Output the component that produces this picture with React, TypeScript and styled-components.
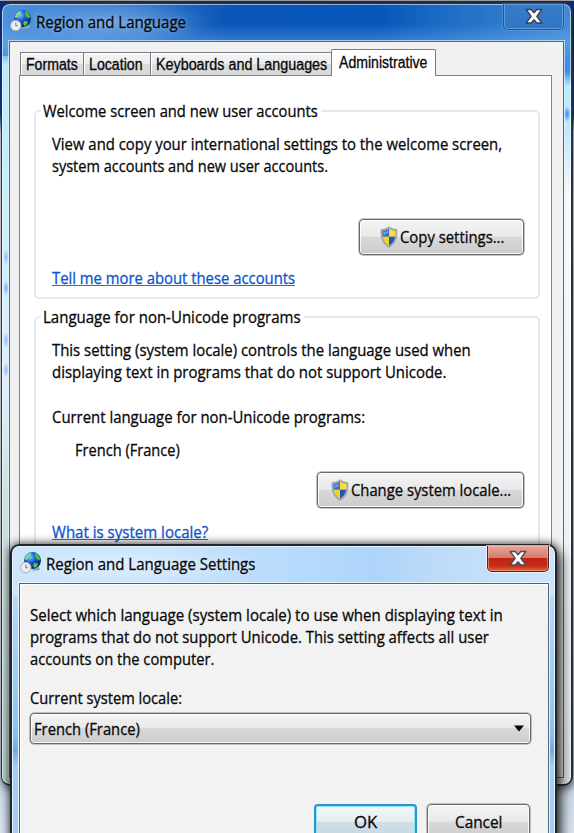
import React, { useLayoutEffect, useRef, useState } from 'react';
import styled, { createGlobalStyle, css } from 'styled-components';

const GlobalStyle = createGlobalStyle`
  * { box-sizing: border-box; }
  body { margin: 0; overflow: hidden; }
`;

const ui = "'Open Sans', 'Noto Sans', sans-serif";
const arial = "'Liberation Sans', Arial, sans-serif";

const Desktop = styled.main`
  position: relative;
  width: 574px;
  height: 833px;
  padding: 2px 0 0 1px;
  overflow: hidden;
  font: 16px/22px ${ui};
  color: #080808;
  background:
    linear-gradient(#a7a9b8, #a7a9b8) 0 0 / 100% 1px no-repeat,
    linear-gradient(180deg, #072e8c 0, #0a3b9c 60px, #153f9c 115px, #d5e9fb 132px, #f7faff 200px, #e8edf3 600px, #c9d7e8 780px, #dbe6f2 100%);
`;

const MainWindow = styled.section`
  width: 572px;
  height: 784px;
  padding: 0 7px 7px;
  border: 2px solid #26313d;
  border-left-width: 1px;
  border-radius: 9px;
  box-shadow: inset 0 0 0 1px rgba(255, 255, 255, 0.55), 1px 3px 8px rgba(0, 0, 0, 0.6);
  background:
    radial-gradient(ellipse 3px 8px at 4px 253px, #8ebcff, transparent) no-repeat,
    radial-gradient(ellipse 3px 8px at 4px 284px, #78adf9, transparent) no-repeat,
    radial-gradient(ellipse 3px 8px at 4px 336px, #8ebcff, transparent) no-repeat,
    radial-gradient(ellipse 3px 8px at 4px 366px, #8ebcff, transparent) no-repeat,
    radial-gradient(ellipse 4px 8px at 565px 110px, #2f8cf1, transparent) no-repeat,
    radial-gradient(ellipse 100px 24px at 110px 18px, rgba(145, 185, 232, 0.6), transparent) no-repeat,
    linear-gradient(180deg, transparent 20px, rgba(120, 180, 240, 0.4) 38px, transparent 60px) no-repeat,
    linear-gradient(90deg, #4c91dc 0, #2d75cc 24%, #0a55b8 40%, #0757ba 66%, #2775ca 84%, #438bd5 100%) 0 0 / 100% 52px no-repeat,
    linear-gradient(180deg, #3b86da 0, #3f8ee3 42px, #b9eafb 60px, #cceffc 230px, #e0eefb 380px, #d0dfe1 490px, #b8cecc 100%) 0 0 / 50% 100% no-repeat,
    linear-gradient(180deg, #3b86da 0, #3f8ee3 68px, #b3efff 82px, #c0eaff 130px, #f7f8fa 190px, #f2f2f2 500px, #e4e4e4 100%);
`;

const TitleBar = styled.header`
  display: flex;
  align-items: flex-start;
  height: 37px;
`;

const TitleIcon = styled.div`
  width: 26px;
  height: 28px;
  padding-top: 5px;
  margin-left: 1px;
  svg { display: block; }
`;

const TitleText = styled.h1`
  margin: 7px 0 0 0;
  font: inherit;
  text-shadow: 0 0 6px rgba(255, 255, 255, 0.45);
  flex: 1;
`;

const CloseButton = styled.button<{ $danger?: boolean }>`
  display: grid;
  place-items: center;
  padding: 0;
  height: 26px;
  border-radius: 0 0 5px 5px;
  ${p =>
    p.$danger
      ? css`
          width: 62px;
          border: 1px solid #551f20;
          border-top: 0;
          background: linear-gradient(#e7a599 0, #d77b6a 46%, #bd2411 50%, #c92d13 80%, #dc6542 100%);
          box-shadow: inset 0 0 0 1px rgba(255, 190, 170, 0.5), 0 0 0 1px rgba(255, 255, 255, 0.65);
        `
      : css`
          width: 61px;
          border: 1px solid #25569a;
          border-top: 0;
          background: linear-gradient(#347cca, #2f77c5);
          box-shadow: inset 0 0 0 1px rgba(126, 180, 232, 0.6), 0 0 0 1px rgba(126, 180, 232, 0.3);
        `}
`;

const Client = styled.div`
  height: 737px;
  padding: 8px 11px 0 9px;
  border: 1px solid #5c6673;
  background: #f1f1f1;
  box-shadow: 0 0 0 1px rgba(230, 246, 255, 0.65);
`;

const TabStrip = styled.nav`
  display: flex;
  align-items: flex-end;
  height: 25px;
  padding-left: 1px;
`;

const Tab = styled.div<{ $w: number; $active?: boolean }>`
  width: ${p => p.$w}px;
  height: ${p => (p.$active ? 27 : 23)}px;
  padding: ${p => (p.$active ? '2px 0 0 7px' : '1px 0 0 5px')};
  border: 1px solid #777c87;
  border-bottom: 0;
  border-right-width: ${p => (p.$active ? 1 : 0)}px;
  border-radius: ${p => (p.$active ? '2px 2px 0 0' : 0)};
  background: ${p => (p.$active ? '#fff' : 'linear-gradient(#f4f4f4 0, #ededed 50%, #dddddd 52%, #d8d8d8 100%)')};
  box-shadow: ${p => (p.$active ? 'none' : 'inset 1px 1px 0 #fff')};
  margin-bottom: ${p => (p.$active ? -1 : 0)}px;
  font: 16px/21px ${arial};
  -webkit-text-stroke: 0.3px #111;
  z-index: 1;
`;

const Panel = styled.div`
  height: 704px;
  padding: 24px 12px 0 14px;
  border: 1px solid #7e8390;
  background: #fff;
`;

const Group = styled.fieldset<{ $h: number }>`
  display: block;
  min-width: 0;
  width: 506px;
  height: ${p => p.$h}px;
  margin: 0 0 7px;
  padding: 0 15px 0 16px;
  border: 2px solid #e0eaf1;
  border-radius: 5px;
`;

const Legend = styled.legend`
  height: 22px;
  margin-left: -11px;
  padding: 0 3px 0 2px;
`;

const Paragraph = styled.div<{ $top: number; $indent?: number }>`
  padding-top: ${p => p.$top}px;
  padding-left: ${p => p.$indent ?? 0}px;
`;

const Link = styled.a`
  display: inline-block;
  color: #0b55cf;
  height: 22px;
  background: linear-gradient(#2672d8, #2672d8) 0 18px / 100% 1px no-repeat;
`;

const ButtonRow = styled.div<{ $top: number; $bottom: number }>`
  display: flex;
  justify-content: flex-end;
  margin: ${p => p.$top}px -1px ${p => p.$bottom}px 0;
`;

const buttonFace = css`
  border: 1px solid #686868;
  border-radius: 4px;
  background: linear-gradient(#f4f4f4 0, #e9e9e9 48%, #d9d9d9 50%, #cbcbcb 100%);
  box-shadow: inset 0 0 0 1px rgba(255, 255, 255, 0.85), 0 0 0 0.5px #8c8c8c;
`;

const PushButton = styled.button<{ $w: number; $primary?: boolean }>`
  ${buttonFace}
  display: flex;
  align-items: center;
  justify-content: center;
  gap: 2px;
  width: ${p => p.$w}px;
  height: 36px;
  padding: 0 0 1px;
  font: inherit;
  color: inherit;
  ${p =>
    p.$primary &&
    css`
      border: 2px solid #2b94c9;
      background: linear-gradient(#f3f7f9 0, #e6eef2 48%, #d0dfe7 50%, #c4d8e2 100%);
      box-shadow: inset 0 0 0 1px #8fe6fb;
    `}
`;

const Dialog = styled.section`
  position: absolute;
  left: 10px;
  top: 544px;
  width: 547px;
  height: 310px;
  padding: 0 6px 0 7px;
  border: 2px solid #20262c;
  border-radius: 9px 9px 0 0;
  box-shadow: inset 0 0 0 1px #e5f5ff, 0 0 9px 1px rgba(0, 0, 0, 0.7), 6px 8px 12px rgba(0, 0, 0, 0.5);
  background:
    radial-gradient(ellipse 130px 25px at 115px 19px, rgba(225, 241, 255, 0.8), transparent) no-repeat,
    linear-gradient(90deg, #cde4fa 0, #c2dff9 35%, #b4d9fd 57%, #aed4fa 67%, #bddbf7 78%, #cce4fb 100%) 0 0 / 100% 50px no-repeat,
    linear-gradient(#c5e1fc, #94c4f2 170px, #89bdf0 190px, #75aadf 205px, #a4cef5 220px);
`;

const DialogBody = styled.div`
  height: 270px;
  padding: 20px 17px 0 10px;
  border: 1px solid #56626d;
  background: #f2f2f2;
  box-shadow: 0 0 0 1px #e6f6ff, inset 1px 1px 0 #fff;
`;

const Select = styled.div`
  ${buttonFace}
  display: flex;
  align-items: center;
  justify-content: space-between;
  width: 501px;
  height: 31px;
  margin-top: 4px;
  padding: 0 5px 0 3px;
`;

const Actions = styled.div`
  display: flex;
  justify-content: flex-end;
  gap: 10px;
  margin: 60px 1px 0 0;
`;

const TextBox = styled.span<{ $w: number }>`
  display: block;
  width: ${p => p.$w}px;
  white-space: nowrap;
`;

const TextRun = styled.span`
  display: inline-block;
  transform-origin: 0 50%;
  -webkit-text-stroke: 0.3px currentColor;
`;

/* One line of text condensed to the given measure. */
function Line({ w, children }: { w: number; children: string }) {
  const run = useRef<HTMLSpanElement>(null);
  const [scale, setScale] = useState(1);
  useLayoutEffect(() => {
    if (run.current) setScale(w / run.current.offsetWidth);
  }, [w, children]);
  return (
    <TextBox $w={w}>
      <TextRun ref={run} style={{ transform: `scaleX(${scale})` }}>{children}</TextRun>
    </TextBox>
  );
}

function GlobeIcon({ id }: { id: string }) {
  return (
    <svg width="22" height="24" viewBox="0 0 22 24">
      <defs>
        <radialGradient id={id} cx="0.35" cy="0.3" r="0.75">
          <stop offset="0" stopColor="#7cc8ff" />
          <stop offset="0.45" stopColor="#1558d0" />
          <stop offset="1" stopColor="#061c66" />
        </radialGradient>
      </defs>
      <path d="M12 20l8-1-1-3-5 1z" fill="#93a5b3" />
      <circle cx="12.500" cy="9.500" r="8.500" fill={`url(#${id})`} />
      <path d="M5.500 6c1.500-3 4-4.300 6-4l-1 2.500-2 1.500-.5 2-2 1-1.500-1z" fill="#7ed98a" />
      <path d="M15 1.800l3 1.700 2.300 4-1.300 2-2.500-1.500-1.500-3z" fill="#3fc33b" />
      <path d="M14.500 12l3.500.5-1 3-2.500 1.500-1.500-2.500z" fill="#4fce30" />
      <circle cx="5.800" cy="16.500" r="5.200" fill="#eceff1" stroke="#a5adb3" />
      <path d="M5.800 13.500v3.500l2.200-.5" fill="none" stroke="#788089" />
    </svg>
  );
}

function ShieldIcon() {
  return (
    <svg width="18" height="22" viewBox="0 0 18 22">
      <path d="M9 .8c2.2 1.8 4.7 2.6 7.9 2.8C17 12 16 17.500 9 21.200 2 17.500 1 12 1.100 3.600 4.300 3.400 6.800 2.600 9 .8z" fill="#a9adb1" stroke="#8b8f92" strokeWidth=".7" />
      <path d="M9 2.800v8H2.900c-.3-1.700-.4-3.700-.3-5.700C5 4.800 7 4.200 9 2.800z" fill="#2d6fd4" />
      <path d="M9 2.800c2 1.400 4 2 6.400 2.300.1 2 0 4-.3 5.700H9z" fill="#ffdc35" />
      <path d="M2.900 10.800H9v8.600c-3.600-2-5.400-4.700-6.100-8.600z" fill="#f6d319" />
      <path d="M9 10.800h6.100c-.7 3.900-2.500 6.600-6.100 8.600z" fill="#1a57b8" />
      <path d="M3.600 6c1.800-.3 3-.7 4.500-1.600v2.500L3.600 9z" fill="#8dbcf4" opacity=".6" />
    </svg>
  );
}

function CloseGlyph({ edge }: { edge: string }) {
  return (
    <svg width="18" height="17" viewBox="0 0 18 17">
      <path d="M1.200 1.500h5L9 4.700l2.800-3.200h5L11.800 8.300l5 6.700h-5L9 11.800 6.200 15h-5l5-6.700z" fill="#fff" stroke={edge} strokeWidth="1.300" strokeLinejoin="round" />
    </svg>
  );
}

function DownArrow() {
  return (
    <svg width="12" height="7" viewBox="0 0 12 7">
      <path d="M1 0.500h10L6 6.500z" fill="#050505" />
    </svg>
  );
}

export default function App() {
  return (
    <>
      <GlobalStyle />
      <Desktop>
        <MainWindow>
          <TitleBar>
            <TitleIcon><GlobeIcon id="globe-main" /></TitleIcon>
            <TitleText><Line w={150}>Region and Language</Line></TitleText>
            <CloseButton aria-label="Close"><CloseGlyph edge="#3c3f4d" /></CloseButton>
          </TitleBar>
          <Client>
            <TabStrip>
              <Tab $w={63}><Line w={52}>Formats</Line></Tab>
              <Tab $w={67}><Line w={54}>Location</Line></Tab>
              <Tab $w={181}><Line w={171}>Keyboards and Languages</Line></Tab>
              <Tab $w={105} $active><Line w={88}>Administrative</Line></Tab>
            </TabStrip>
            <Panel>
              <Group $h={199}>
                <Legend><Line w={275}>Welcome screen and new user accounts</Line></Legend>
                <Paragraph $top={11}>
                  <Line w={450}>View and copy your international settings to the welcome screen,</Line>
                  <Line w={276}>system accounts and new user accounts.</Line>
                </Paragraph>
                <ButtonRow $top={42} $bottom={12}>
                  <PushButton $w={165}><ShieldIcon /><Line w={104}>Copy settings...</Line></PushButton>
                </ButtonRow>
                <Link><Line w={243}>Tell me more about these accounts</Line></Link>
              </Group>
              <Group $h={330}>
                <Legend><Line w={258}>Language for non-Unicode programs</Line></Legend>
                <Paragraph $top={11}>
                  <Line w={419}>This setting (system locale) controls the language used when</Line>
                  <Line w={394}>displaying text in programs that do not support Unicode.</Line>
                </Paragraph>
                <Paragraph $top={23}><Line w={313}>Current language for non-Unicode programs:</Line></Paragraph>
                <Paragraph $top={11} $indent={23}><Line w={105}>French (France)</Line></Paragraph>
                <ButtonRow $top={11} $bottom={13}>
                  <PushButton $w={207}><ShieldIcon /><Line w={160}>Change system locale...</Line></PushButton>
                </ButtonRow>
                <Link><Line w={156}>What is system locale?</Line></Link>
              </Group>
            </Panel>
          </Client>
        </MainWindow>

        <Dialog>
          <TitleBar>
            <TitleIcon><GlobeIcon id="globe-dialog" /></TitleIcon>
            <TitleText><Line w={209}>Region and Language Settings</Line></TitleText>
            <CloseButton $danger aria-label="Close"><CloseGlyph edge="#454c5b" /></CloseButton>
          </TitleBar>
          <DialogBody>
            <Line w={473}>Select which language (system locale) to use when displaying text in</Line>
            <Line w={459}>programs that do not support Unicode. This setting affects all user</Line>
            <Line w={184}>accounts on the computer.</Line>
            <Paragraph $top={17}><Line w={152}>Current system locale:</Line></Paragraph>
            <Select><Line w={106}>French (France)</Line><DownArrow /></Select>
            <Actions>
              <PushButton $w={103} $primary><Line w={23}>OK</Line></PushButton>
              <PushButton $w={103}><Line w={47}>Cancel</Line></PushButton>
            </Actions>
          </DialogBody>
        </Dialog>
      </Desktop>
    </>
  );
}
